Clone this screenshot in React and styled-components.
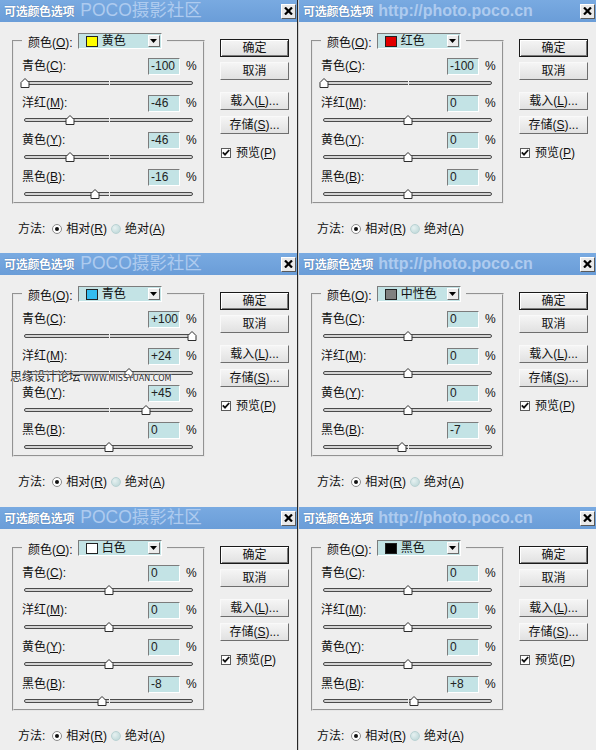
import React from "react";
import styled, { createGlobalStyle } from "styled-components";

const Global = createGlobalStyle`
  html, body { margin: 0; padding: 0; background: #eeeeee; }
  body {
    font-family: "Liberation Sans", "Noto Sans CJK SC", sans-serif;
    font-size: 12px;
    color: #111;
  }
  * { box-sizing: border-box; }
`;

const Page = styled.div`
  position: relative;
  width: 596px;
  height: 750px;
  overflow: hidden;
  display: grid;
  grid-template-columns: 297px 297px;
  grid-template-rows: 253px 254px 243px;
  column-gap: 2px;
  background: linear-gradient(to right, #262626 0 1px, #cfcfcf 1px 2px) 297px 0 / 2px 100% no-repeat, #eeeeee;
`;

const Dialog = styled.section`
  display: flex;
  flex-direction: column;
  background: #eeeeee;
  overflow: hidden;
`;

const TitleBar = styled.header`
  height: 22px;
  flex: none;
  display: flex;
  align-items: center;
  padding: 0 1px 0 4px;
  background: linear-gradient(#79aae1, #6a9dd8);
`;

const TitleText = styled.span`
  color: #fff;
  font-weight: bold;
  font-size: 12px;
  line-height: 1;
  font-family: "Noto Sans CJK SC", sans-serif;
  letter-spacing: -0.3px;
  text-shadow: 0 0 1px rgba(30, 60, 110, 0.7);
  white-space: nowrap;
`;

const Brand = styled.span`
  flex: 1;
  margin-left: ${(p) => (p.$url ? "5px" : "6px")};
  color: #aecbef;
  white-space: nowrap;
  line-height: 1;
  font-size: ${(p) => (p.$url ? "16px" : "17.5px")};
  font-weight: ${(p) => (p.$url ? "bold" : "normal")};
  font-family: "Liberation Sans", "Noto Sans CJK SC", sans-serif;
`;

const CloseBtn = styled.span`
  width: 15px;
  height: 15px;
  flex: none;
  display: flex;
  align-items: center;
  justify-content: center;
  border: 1px solid;
  border-color: #ffffff #5a5a5a #5a5a5a #ffffff;
  background: #e9e9e9;
`;

const Body = styled.div`
  display: flex;
  gap: 15px;
  padding: 0 8px 0 12px;
`;

const LeftCol = styled.div`
  width: 193px;
  display: flex;
  flex-direction: column;
`;

const Group = styled.fieldset`
  margin: 11px 0 0;
  width: 193px;
  min-width: 0;
  padding: 8px 10px 0 8px;
  border: 2px groove #e6e6e6;
`;

const Legend = styled.legend`
  display: flex;
  align-items: center;
  gap: 5px;
  padding: 0 5px 0 6px;
  margin: 0;
  height: 16px;
  white-space: nowrap;
`;

const Dropdown = styled.div`
  width: 84px;
  height: 16px;
  display: flex;
  align-items: center;
  gap: 4px;
  padding-left: 7px;
  border: 1px solid;
  border-color: #7c7c7c #ffffff #ffffff #7c7c7c;
  background: #c3e3e5;
`;

const Swatch = styled.span`
  width: 12px;
  height: 11px;
  flex: none;
  border: 1px solid #222;
  background: ${(p) => p.$c};
`;

const DropText = styled.span`
  flex: 1;
  line-height: 1;
`;

const DropArrow = styled.span`
  width: 12px;
  height: 12px;
  margin-right: 1px;
  flex: none;
  display: flex;
  align-items: center;
  justify-content: center;
  border: 1px solid;
  border-color: #ffffff #6a6a6a #6a6a6a #ffffff;
  background: #ececec;
`;

const Param = styled.div`
  display: flex;
  flex-direction: column;
  & + & {
    margin-top: 3px;
  }
`;

const ParamHead = styled.div`
  display: flex;
  align-items: center;
  height: 18px;
  white-space: nowrap;
`;

const ParamLabel = styled.span`
  flex: 1;
  min-width: 0;
  line-height: 1;
`;

const ValueBox = styled.div`
  width: 32px;
  height: 17px;
  flex: none;
  padding: 0 2px;
  border: 1px solid;
  border-color: #7c7c7c #ffffff #ffffff #7c7c7c;
  background: #c3e3e5;
  font-size: 12px;
  line-height: 15px;
  color: #222;
`;

const Pct = styled.span`
  width: 7px;
  flex: none;
  margin-left: 6px;
  line-height: 1;
`;

const SliderZone = styled.div`
  height: 16px;
  padding-top: 6px;
  margin-left: 2px;
`;

const Track = styled.div`
  position: relative;
  height: 4px;
  border: 1px solid #4a4a4a;
  border-radius: 2px;
  background: #d4d4d4;
`;

const Tick = styled.span`
  position: absolute;
  left: 50%;
  top: -1px;
  width: 1px;
  height: 4px;
  background: #f2f2f2;
`;

const Thumb = styled.svg`
  position: absolute;
  top: -4px;
  width: 9px;
  height: 10px;
  transform: translateX(-50%);
  overflow: visible;
`;

const MethodRow = styled.div`
  display: flex;
  align-items: center;
  height: 16px;
  margin-top: 17px;
  padding-left: 6px;
  white-space: nowrap;
`;

const MethodLabel = styled.span`
  line-height: 1;
  margin-right: 7px;
`;

const RadioOption = styled.label`
  display: flex;
  align-items: center;
  gap: 4px;
  line-height: 1;
  & + & {
    margin-left: 4px;
  }
`;

const RadioDot = styled.span`
  width: 10px;
  height: 10px;
  border-radius: 50%;
  flex: none;
  display: flex;
  align-items: center;
  justify-content: center;
  border: 1px solid ${(p) => (p.$on ? "#8a8a8a" : "#b9d2d3")};
  background: ${(p) => (p.$on ? "#ffffff" : "radial-gradient(circle at 35% 35%, #e6f1f1, #b8d4d5)")};
  &::after {
    content: "";
    display: ${(p) => (p.$on ? "block" : "none")};
    width: 4px;
    height: 4px;
    border-radius: 50%;
    background: #111;
  }
`;

const RightCol = styled.div`
  width: 69px;
  display: flex;
  flex-direction: column;
  padding-top: 17px;
`;

const Btn = styled.div`
  width: 69px;
  height: 18px;
  margin-top: ${(p) => p.$gap || 0}px;
  display: flex;
  align-items: center;
  justify-content: center;
  font-size: 12px;
  line-height: 1;
  white-space: nowrap;
  border: 1px solid;
  border-color: ${(p) => (p.$default ? "#1a1a1a" : "#f9f9f9 #6e6e6e #6e6e6e #f9f9f9")};
  box-shadow: ${(p) => (p.$default ? "inset 1px 1px 0 #ffffff, inset -1px -1px 0 #7a7a7a" : "none")};
  background: linear-gradient(#f5f5f5, #e1e1e1);
`;

const CheckRow = styled.label`
  display: flex;
  align-items: center;
  gap: 5px;
  height: 13px;
  margin-top: 12px;
  padding-left: 1px;
  line-height: 1;
  white-space: nowrap;
`;

const CheckBox = styled.span`
  width: 10px;
  height: 10px;
  flex: none;
  display: flex;
  align-items: center;
  justify-content: center;
  border: 1px solid #5a5a5a;
  background: #ffffff;
`;

const SiteMark = styled.div`
  position: absolute;
  left: 10px;
  top: 370px;
  display: flex;
  align-items: baseline;
  gap: 3px;
  white-space: nowrap;
  color: #2a2a2a;
  text-shadow: 0 0 2px #ffffff, 0 0 1px #ffffff;
  pointer-events: none;
`;

const SiteName = styled.span`
  font-family: "Noto Sans CJK SC", sans-serif;
  font-size: 12px;
  line-height: 1;
  letter-spacing: -0.3px;
`;

const SiteUrl = styled.span`
  font-family: "DejaVu Sans", sans-serif;
  font-size: 8px;
  line-height: 1;
  letter-spacing: 0;
`;

const U = ({ children }) => <u>{children}</u>;

const params = [
  { name: "青色", key: "C" },
  { name: "洋红", key: "M" },
  { name: "黄色", key: "Y" },
  { name: "黑色", key: "B" },
];

const dialogs = [
  { brand: "POCO摄影社区", url: false, color: "黄色", swatch: "#ffff00", values: [-100, -46, -46, -16] },
  { brand: "http://photo.poco.cn", url: true, color: "红色", swatch: "#e00000", values: [-100, 0, 0, 0] },
  { brand: "POCO摄影社区", url: false, color: "青色", swatch: "#33bdf0", values: [100, 24, 45, 0] },
  { brand: "http://photo.poco.cn", url: true, color: "中性色", swatch: "#808080", values: [0, 0, 0, -7] },
  { brand: "POCO摄影社区", url: false, color: "白色", swatch: "#ffffff", values: [0, 0, 0, -8] },
  { brand: "http://photo.poco.cn", url: true, color: "黑色", swatch: "#000000", values: [0, 0, 0, 8] },
];

const fmt = (v) => (v > 0 ? `+${v}` : `${v}`);

function CloseIcon() {
  return (
    <svg width="9" height="8" viewBox="0 0 9 8">
      <path d="M1 0.5 L8 7.5 M8 0.5 L1 7.5" stroke="#000" strokeWidth="2.2" />
    </svg>
  );
}

function Slider({ value }) {
  const pct = ((value + 100) / 200) * 100;
  return (
    <SliderZone>
      <Track>
        <Tick />
        <Thumb viewBox="0 0 9 10" style={{ left: `${pct}%` }}>
          <polygon points="4.5,0.5 8.5,4.5 8.5,9.5 0.5,9.5 0.5,4.5" fill="#ffffff" stroke="#2e2e2e" strokeWidth="1" />
        </Thumb>
      </Track>
    </SliderZone>
  );
}

function SelectiveColor({ d }) {
  return (
    <Dialog>
      <TitleBar>
        <TitleText>可选颜色选项</TitleText>
        <Brand $url={d.url}>{d.brand}</Brand>
        <CloseBtn>
          <CloseIcon />
        </CloseBtn>
      </TitleBar>
      <Body>
        <LeftCol>
          <Group>
            <Legend>
              <span>
                颜色(<U>O</U>):
              </span>
              <Dropdown>
                <Swatch $c={d.swatch} />
                <DropText>{d.color}</DropText>
                <DropArrow>
                  <svg width="7" height="4" viewBox="0 0 7 4">
                    <path d="M0 0 H7 L3.5 4 Z" fill="#000" />
                  </svg>
                </DropArrow>
              </Dropdown>
            </Legend>
            {params.map((p, i) => (
              <Param key={p.key}>
                <ParamHead>
                  <ParamLabel>
                    {p.name}(<U>{p.key}</U>):
                  </ParamLabel>
                  <ValueBox>{fmt(d.values[i])}</ValueBox>
                  <Pct>%</Pct>
                </ParamHead>
                <Slider value={d.values[i]} />
              </Param>
            ))}
          </Group>
          <MethodRow>
            <MethodLabel>方法:</MethodLabel>
            <RadioOption>
              <RadioDot $on />
              <span>
                相对(<U>R</U>)
              </span>
            </RadioOption>
            <RadioOption>
              <RadioDot />
              <span>
                绝对(<U>A</U>)
              </span>
            </RadioOption>
          </MethodRow>
        </LeftCol>
        <RightCol>
          <Btn $default>确定</Btn>
          <Btn $gap={5}>取消</Btn>
          <Btn $gap={12}>
            载入(<U>L</U>)...
          </Btn>
          <Btn $gap={6}>
            存储(<U>S</U>)...
          </Btn>
          <CheckRow>
            <CheckBox>
              <svg width="8" height="7" viewBox="0 0 8 7">
                <path d="M0.8 3.4 L3 5.6 L7.2 1" fill="none" stroke="#111" strokeWidth="1.8" />
              </svg>
            </CheckBox>
            <span>
              预览(<U>P</U>)
            </span>
          </CheckRow>
        </RightCol>
      </Body>
    </Dialog>
  );
}

export default function App() {
  return (
    <>
      <Global />
      <Page>
        {dialogs.map((d, i) => (
          <SelectiveColor key={i} d={d} />
        ))}
        <SiteMark>
          <SiteName>思缘设计论坛</SiteName>
          <SiteUrl>WWW.MISSYUAN.COM</SiteUrl>
        </SiteMark>
      </Page>
    </>
  );
}
